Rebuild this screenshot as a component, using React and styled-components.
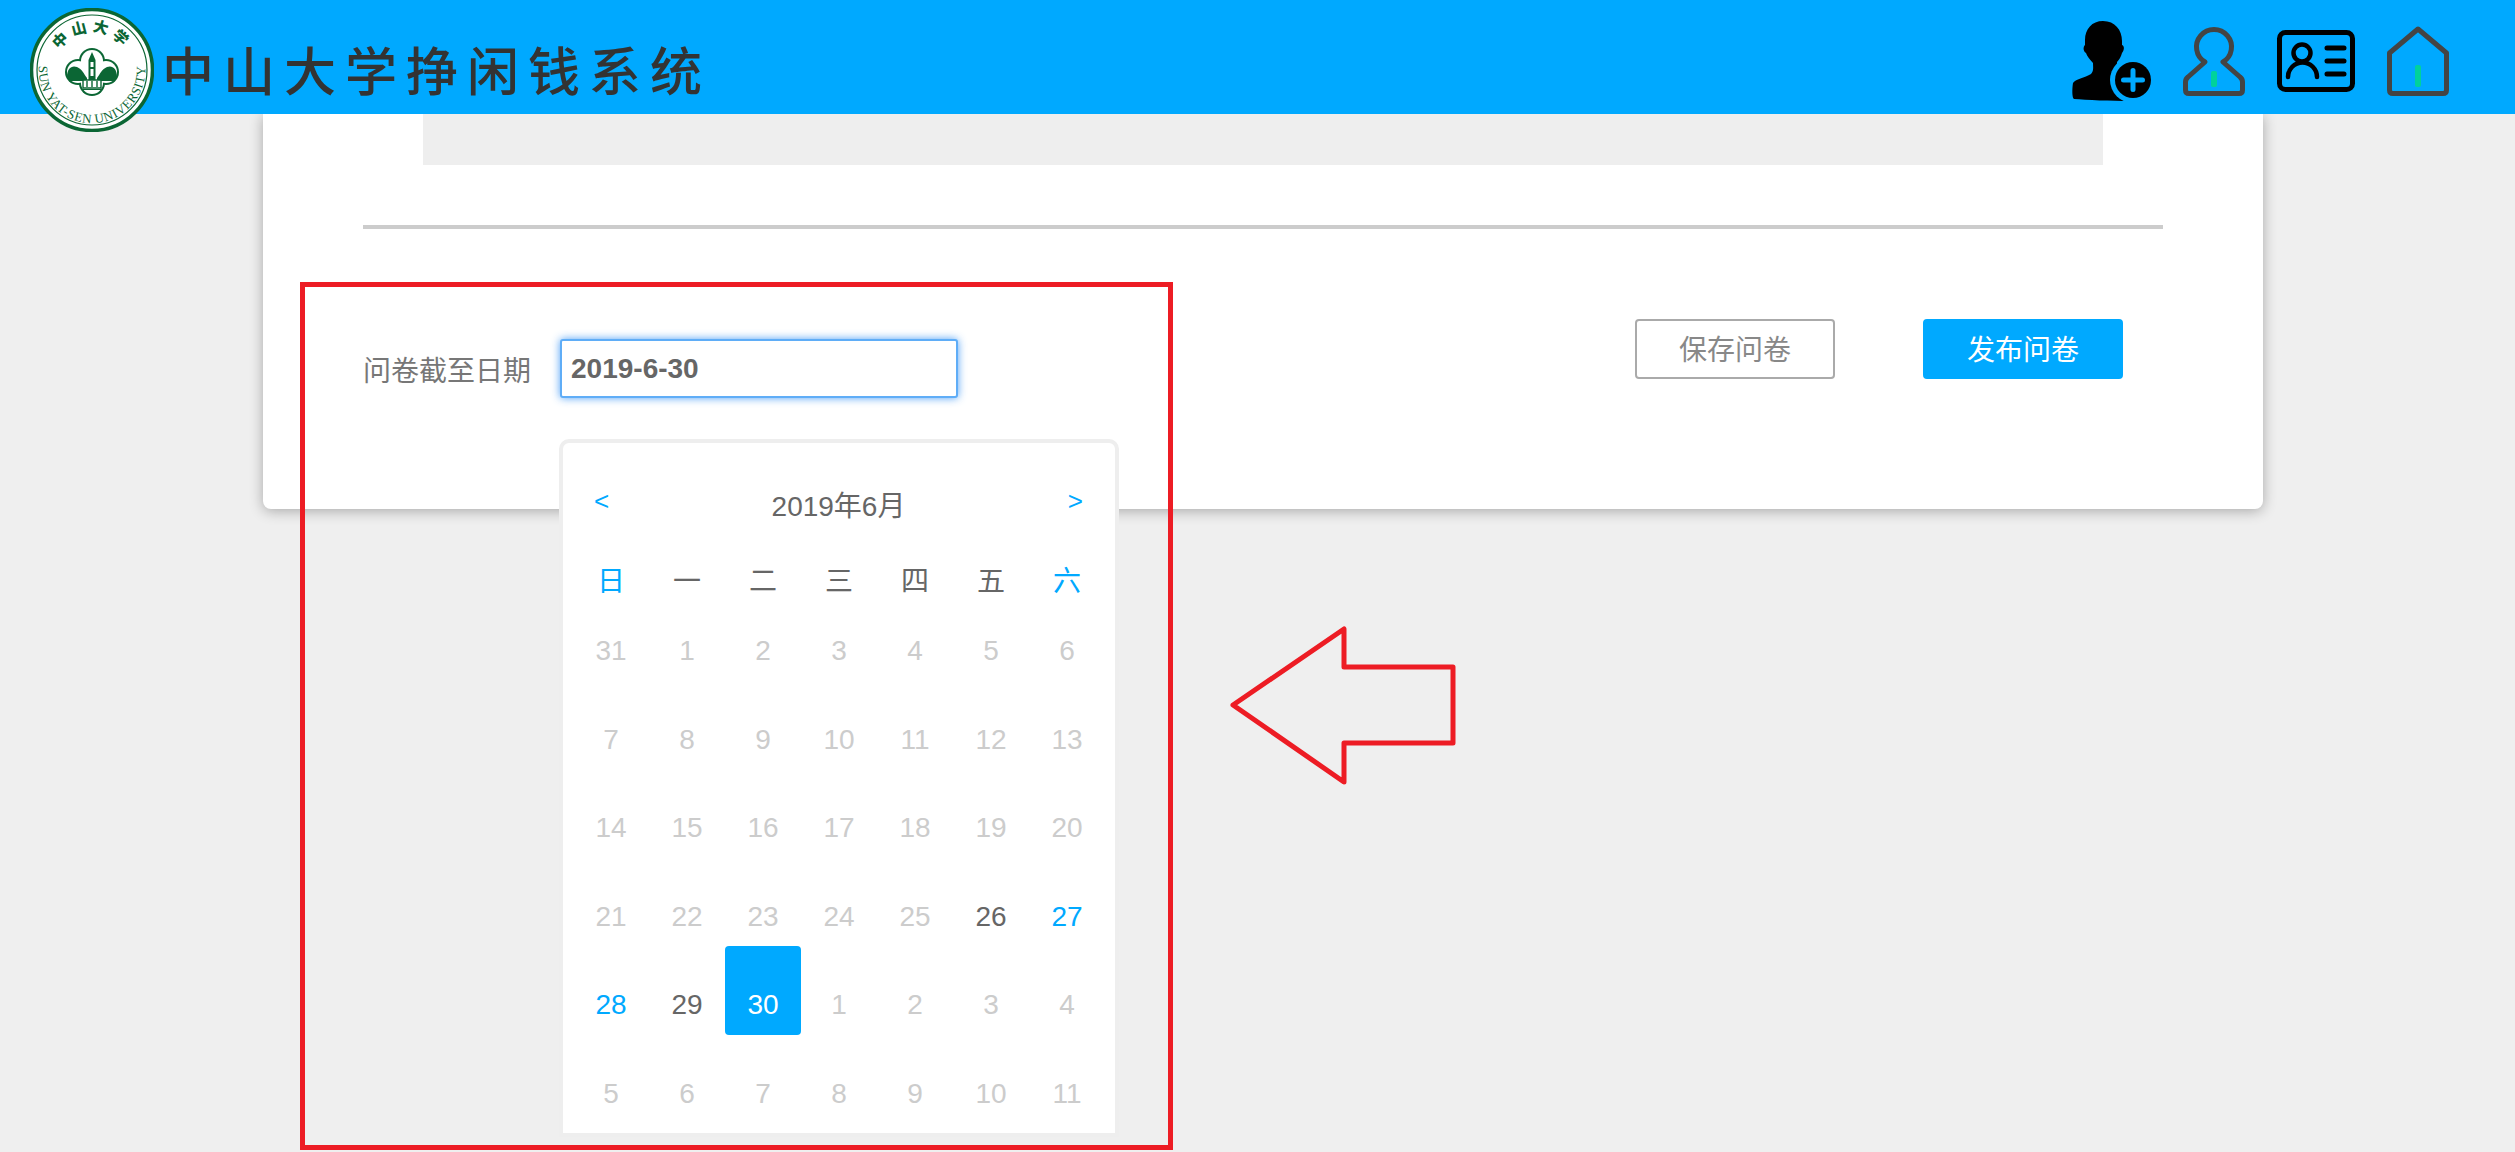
import React from "react";
import styled, { createGlobalStyle } from "styled-components";

const BLUE = "#00a9ff";
const FONT = '"Liberation Sans", "Noto Sans CJK SC", sans-serif';

const WEEK = [
  { label: "日", weekend: true },
  { label: "一" },
  { label: "二" },
  { label: "三" },
  { label: "四" },
  { label: "五" },
  { label: "六", weekend: true },
];

const DAYS = [
  ...[31, 1, 2, 3, 4, 5, 6, 7, 8, 9, 10, 11, 12, 13, 14, 15, 16, 17, 18, 19, 20, 21, 22, 23, 24, 25].map((d) => ({ d, kind: "off" })),
  { d: 26, kind: "on" },
  { d: 27, kind: "weekend" },
  { d: 28, kind: "weekend" },
  { d: 29, kind: "on" },
  { d: 30, kind: "selected" },
  ...[1, 2, 3, 4, 5, 6, 7, 8, 9, 10, 11].map((d) => ({ d, kind: "off" })),
];

function Logo() {
  return (
    <LogoSvg viewBox="-62 -62 124 124">
      <circle r="60.5" fill="#fff" stroke="#0b6634" strokeWidth="3.5" />
      <circle r="55" fill="none" stroke="#0b6634" strokeWidth="1.2" />
      <defs>
        <path id="logoTopWide" d="M-38 0 A38 38 0 0 1 38 0" />
        <path id="logoBottomWide" d="M-50 -18.2 A53.2 53.2 0 1 0 50 -18.2" />
      </defs>
      <text fontFamily='"Noto Sans CJK SC", sans-serif' fontWeight="900" fontSize="15" fill="#0b6634" textAnchor="middle" letterSpacing="4.5">
        <textPath href="#logoTopWide" startOffset="50%">中山大学</textPath>
      </text>
      <text fontFamily='"Liberation Serif", serif' fontSize="13" fill="#0b6634" textAnchor="middle" letterSpacing="0.6">
        <textPath href="#logoBottomWide" startOffset="50%">SUN YAT-SEN UNIVERSITY</textPath>
      </text>
      <g transform="translate(0 2)">
        <g fill="#0b6634">
          <circle cx="0" cy="-11" r="13" />
          <circle cx="0" cy="11" r="13" />
          <circle cx="-14" cy="0" r="13" />
          <circle cx="14" cy="0" r="13" />
        </g>
        <g fill="#fff">
          <circle cx="0" cy="-11" r="11" />
          <circle cx="0" cy="11" r="11" />
          <circle cx="-14" cy="0" r="11" />
          <circle cx="14" cy="0" r="11" />
        </g>
        <path d="M-25 5 C-25 -4 -20 -7 -15 -5 C-10 -3 -8 2 -5 6 L-5 9 L-22 9 Z" fill="#0b6634" />
        <path d="M25 5 C25 -4 20 -7 15 -5 C10 -3 8 2 5 6 L5 9 L22 9 Z" fill="#0b6634" />
        <path d="M-3.5 10 V-12 L0 -20 L3.5 -12 V10 Z" fill="#0b6634" />
        <rect x="-1.5" y="-10" width="3" height="5" fill="#fff" />
        <rect x="-1.5" y="-3" width="3" height="7" fill="#fff" />
        <path d="M-9 16 V8 H9 V16 Z" fill="#fff" stroke="#0b6634" strokeWidth="1.4" />
        <path d="M-5 9 V15 M0 9 V15 M5 9 V15" stroke="#0b6634" strokeWidth="1.4" />
        <path d="M-9 17.5 H9" stroke="#0b6634" strokeWidth="1" />
      </g>
    </LogoSvg>
  );
}

function AddUserIcon() {
  return (
    <Icon width="80" height="80" viewBox="0 0 80 80">
      <path
        d="M32 0 C44 0 51 9 51 20 L51 24 C54 25 53 30 51 32 C50 36 48 39 46 41 L46 46 L66 60 L60 80 C40 80 15 79 3 78 C1 77 1 68 2 62 C4 58 14 57 20 53 C23 50 22 46 22 42 C19 39 16 35 15 32 C12 30 12 26 14 24 L14 19 C14 8 21 0 32 0 Z"
        fill="#000"
      />
      <circle cx="62" cy="59" r="23" fill={BLUE} />
      <circle cx="62" cy="59" r="18" fill="#000" />
      <path d="M62 49.5 V68.5 M52.5 59 H71.5" stroke={BLUE} strokeWidth="5" strokeLinecap="round" />
    </Icon>
  );
}

function PersonIcon() {
  return (
    <Icon width="62" height="70" viewBox="0 0 62 70">
      <path
        d="M22 36 A17.5 17.5 0 1 1 40 36 L57 51 Q59.5 53 59.5 56 V64 Q59.5 67.5 56 67.5 H6 Q2.5 67.5 2.5 64 V56 Q2.5 53 5 51 Z"
        fill="none"
        stroke="#444"
        strokeWidth="5"
        strokeLinejoin="round"
      />
      <rect x="28" y="45" width="6" height="16" rx="2" fill="#00d29b" />
    </Icon>
  );
}

function CardIcon() {
  return (
    <Icon width="78" height="62" viewBox="0 0 78 62">
      <rect x="2.5" y="2.5" width="73" height="57" rx="6" fill="none" stroke="#000" strokeWidth="5" />
      <circle cx="25" cy="23" r="8.5" fill="none" stroke="#000" strokeWidth="4.5" />
      <path d="M11 47 A14.5 14.5 0 0 1 40 47" fill="none" stroke="#000" strokeWidth="4.5" strokeLinecap="round" />
      <path d="M50 18 H67 M50 31 H67 M50 44 H67" stroke="#000" strokeWidth="5" strokeLinecap="round" />
    </Icon>
  );
}

function HomeIcon() {
  return (
    <Icon width="62" height="70" viewBox="0 0 62 70">
      <path
        d="M31 3 L59.5 27 V64 Q59.5 67.5 56 67.5 H6 Q2.5 67.5 2.5 64 V27 Z"
        fill="none"
        stroke="#444"
        strokeWidth="5"
        strokeLinejoin="round"
      />
      <rect x="28" y="39" width="6" height="22" rx="2" fill="#00d29b" />
    </Icon>
  );
}

function Calendar() {
  return (
    <Popup>
      <CalendarHead>
        <MonthArrow>&lt;</MonthArrow>
        <MonthTitle>2019年6月</MonthTitle>
        <MonthArrow>&gt;</MonthArrow>
      </CalendarHead>
      <WeekRow>
        {WEEK.map((w) => (
          <WeekDay key={w.label} $weekend={w.weekend}>{w.label}</WeekDay>
        ))}
      </WeekRow>
      <DayGrid>
        {DAYS.map((day, i) => (
          <Day key={i} $kind={day.kind}>{day.d}</Day>
        ))}
      </DayGrid>
    </Popup>
  );
}

export default function App() {
  return (
    <Page>
      <GlobalStyle />
      <Header>
        <Logo />
        <Title>中山大学挣闲钱系统</Title>
        <IconBar>
          <AddUserIcon />
          <PersonIcon />
          <CardIcon />
          <HomeIcon />
        </IconBar>
      </Header>
      <Card>
        <GreyPanel />
        <Divider />
        <Footer>
          <Field>
            <FieldLabel>问卷截至日期</FieldLabel>
            <InputWrap>
              <DateInput readOnly value="2019-6-30" />
              <Calendar />
            </InputWrap>
          </Field>
          <Actions>
            <Button>保存问卷</Button>
            <Button $primary>发布问卷</Button>
          </Actions>
        </Footer>
      </Card>
      <RedFrame />
      <RedArrow viewBox="0 0 230 166" width="230" height="166">
        <path d="M3 80 L114 4 V42 H223 V118 H114 V157 Z" fill="none" stroke="#ed1c24" strokeWidth="5" strokeLinejoin="round" />
      </RedArrow>
    </Page>
  );
}

const GlobalStyle = createGlobalStyle`
  html, body {
    margin: 0;
    padding: 0;
    background: #efefef;
    font-family: ${FONT};
  }
`;

const Page = styled.div`
  position: relative;
  height: 1152px;
  overflow: hidden;
  background: #efefef;
`;

const Header = styled.header`
  position: relative;
  z-index: 2;
  display: flex;
  align-items: flex-start;
  height: 114px;
  padding: 8px 66px 0 30px;
  box-sizing: border-box;
  background: ${BLUE};
`;

const LogoSvg = styled.svg`
  flex: none;
  width: 124px;
  height: 124px;
`;

const Title = styled.h1`
  margin: 29px 0 0 8px;
  font-family: "Noto Sans CJK SC", sans-serif;
  font-size: 52px;
  line-height: 64px;
  font-weight: 500;
  letter-spacing: 9px;
  color: #333;
`;

const IconBar = styled.nav`
  display: flex;
  align-items: center;
  gap: 32px;
  height: 106px;
  margin-left: auto;
`;

const Icon = styled.svg`
  display: block;
  flex: none;
`;

const Card = styled.main`
  width: 2000px;
  height: 395px;
  margin-left: 263px;
  border-radius: 0 0 8px 8px;
  background: #fff;
  box-shadow: 0 2px 14px rgba(0, 0, 0, 0.3);
`;

const GreyPanel = styled.div`
  height: 51px;
  margin: 0 160px;
  background: #eee;
`;

const Divider = styled.div`
  height: 4px;
  margin: 60px 100px 0;
  background: #ccc;
`;

const Footer = styled.div`
  display: flex;
  align-items: flex-start;
  justify-content: space-between;
  margin: 90px 140px 0 100px;
`;

const Field = styled.div`
  display: flex;
  align-items: center;
  gap: 29px;
  margin-top: 20px;
`;

const FieldLabel = styled.label`
  font-size: 28px;
  color: #777;
`;

const InputWrap = styled.div`
  position: relative;
`;

const DateInput = styled.input`
  display: block;
  width: 398px;
  height: 59px;
  padding: 0 9px;
  box-sizing: border-box;
  border: 2px solid #5fadf7;
  border-radius: 3px;
  outline: none;
  box-shadow: 0 0 9px rgba(60, 150, 245, 0.9);
  font-family: ${FONT};
  font-size: 28px;
  font-weight: 700;
  color: #666;
`;

const Popup = styled.div`
  position: absolute;
  top: 100px;
  left: -1px;
  width: 560px;
  height: 698px;
  padding: 39px 10px 0;
  box-sizing: border-box;
  border: 4px solid #eee;
  border-radius: 10px 10px 0 0;
  background: #fff;
`;

const CalendarHead = styled.div`
  display: flex;
  align-items: center;
  justify-content: space-between;
  height: 44px;
  padding: 0 22px 0 21px;
`;

const MonthTitle = styled.span`
  font-size: 28px;
  color: #666;
`;

const MonthArrow = styled.span`
  position: relative;
  top: -3px;
  font-size: 26px;
  color: ${BLUE};
`;

const WeekRow = styled.div`
  display: grid;
  grid-template-columns: repeat(7, 76px);
  height: 66px;
  padding-top: 46px;
  box-sizing: border-box;
`;

const WeekDay = styled.span`
  font-size: 28px;
  line-height: 20px;
  text-align: center;
  color: ${(p) => (p.$weekend ? BLUE : "#666")};
`;

const DAY_COLORS = {
  off: "#ccc",
  on: "#666",
  weekend: BLUE,
  selected: "#fff",
};

const DayGrid = styled.div`
  display: grid;
  grid-template-columns: repeat(7, 76px);
  grid-auto-rows: 88.5px;
`;

const Day = styled.span`
  padding-top: 44px;
  box-sizing: border-box;
  border-radius: 4px;
  font-size: 28px;
  line-height: 30px;
  text-align: center;
  color: ${(p) => DAY_COLORS[p.$kind]};
  background: ${(p) => (p.$kind === "selected" ? BLUE : "transparent")};
`;

const Actions = styled.div`
  display: flex;
  gap: 88px;
`;

const Button = styled.button`
  width: 200px;
  height: 60px;
  padding: 0 0 3px;
  box-sizing: border-box;
  border: 2px solid ${(p) => (p.$primary ? BLUE : "#aaa")};
  border-radius: 4px;
  background: ${(p) => (p.$primary ? BLUE : "#fff")};
  font-family: ${FONT};
  font-size: 28px;
  color: ${(p) => (p.$primary ? "#fff" : "#888")};
`;

const RedFrame = styled.div`
  position: absolute;
  z-index: 3;
  top: 282px;
  left: 300px;
  width: 873px;
  height: 868px;
  box-sizing: border-box;
  border: 5px solid #ed1c24;
`;

const RedArrow = styled.svg`
  position: absolute;
  z-index: 3;
  top: 625px;
  left: 1230px;
`;
